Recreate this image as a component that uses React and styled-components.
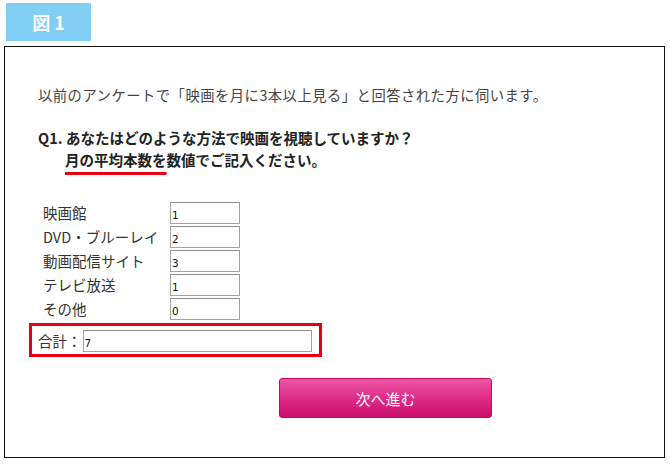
import React from 'react';
import styled, { createGlobalStyle } from 'styled-components';

const GlobalStyle = createGlobalStyle`
  body {
    margin: 0;
    background: #fff;
    font-family: "Noto Sans CJK JP", "Noto Sans", sans-serif;
    color: #333;
  }
`;

const StyledPageDiv = styled.div`
  padding: 3px 0 0 4px;
`;

const StyledBadgeDiv = styled.div`
  box-sizing: border-box;
  width: 85px;
  height: 38px;
  margin-left: 2px;
  padding-left: 4px;
  background: #80cef4;
  color: #fff;
  font-weight: bold;
  font-size: 18px;
  letter-spacing: 4px;
  display: flex;
  align-items: center;
  justify-content: center;
`;

const StyledFrameDiv = styled.div`
  box-sizing: border-box;
  width: 661px;
  height: 412px;
  margin-top: 5px;
  border: 1px solid #111;
  padding: 38px 0 0 24px;
`;

const StyledIntroP = styled.p`
  margin: 0 0 0 9px;
  font-size: 14.3px;
  letter-spacing: 0.5px;
  line-height: 20px;
  color: #444;
`;

const StyledQuestionP = styled.p`
  margin: 22px 0 0 9px;
  padding-left: 27px;
  font-size: 14.5px;
  line-height: 22px;
  font-weight: bold;
  color: #222;
`;

const StyledQNumSpan = styled.span`
  display: inline-block;
  width: 28px;
  margin-left: -27px;
`;

const StyledMarkSpan = styled.span`
  text-decoration: underline;
  text-decoration-color: #e60012;
  text-decoration-thickness: 3px;
  text-underline-offset: 6px;
`;

const StyledRowsDiv = styled.div`
  display: grid;
  grid-template-columns: 127px 70px;
  grid-auto-rows: 22px;
  row-gap: 2px;
  margin: 31px 0 0 14px;
`;

const StyledLabelSpan = styled.span`
  font-size: 14.5px;
  line-height: 22px;
  color: #333;
  white-space: nowrap;
`;

const StyledInput = styled.input`
  box-sizing: border-box;
  width: ${p => p.w}px;
  height: 22px;
  margin: 0;
  padding: 3px 1px 0;
  border: 1px solid #a3a3a3;
  border-top-color: #8e8e8e;
  font-family: "DejaVu Sans", "Liberation Sans", sans-serif;
  font-size: 10.5px;
  color: #111;
  background: #fff;
  outline: none;
`;

const StyledTotalDiv = styled.div`
  box-sizing: border-box;
  width: 293px;
  height: 34px;
  margin-top: 3px;
  border: 3px solid #e60012;
  padding: 4px 0 0 6px;
  display: flex;
  align-items: flex-start;
  gap: 1px;
`;

const StyledButton = styled.button`
  display: flex;
  align-items: center;
  justify-content: center;
  width: 213px;
  height: 40px;
  margin: 21px 0 0 250px;
  border: 1px solid #c20a63;
  border-radius: 3px;
  background: linear-gradient(to bottom, #ec56a5 0%, #df2c88 50%, #cb0d6b 100%);
  color: #fff;
  font-family: inherit;
  font-size: 15px;
  cursor: pointer;
`;

const items = [
  { label: '映画館', value: '1' },
  { label: 'DVD・ブルーレイ', value: '2' },
  { label: '動画配信サイト', value: '3' },
  { label: 'テレビ放送', value: '1' },
  { label: 'その他', value: '0' },
];

const App = () => (
  <StyledPageDiv>
    <GlobalStyle />
    <StyledBadgeDiv>図1</StyledBadgeDiv>
    <StyledFrameDiv>
      <StyledIntroP>以前のアンケートで「映画を月に3本以上見る」と回答された方に伺います。</StyledIntroP>
      <StyledQuestionP>
        <StyledQNumSpan>Q1.</StyledQNumSpan>あなたはどのような方法で映画を視聴していますか？
        <br />
        <StyledMarkSpan>月の平均本数を</StyledMarkSpan>数値でご記入ください。
      </StyledQuestionP>
      <StyledRowsDiv>
        {items.map(item => (
          <React.Fragment key={item.label}>
            <StyledLabelSpan>{item.label}</StyledLabelSpan>
            <StyledInput w={70} defaultValue={item.value} />
          </React.Fragment>
        ))}
      </StyledRowsDiv>
      <StyledTotalDiv>
        <StyledLabelSpan>合計：</StyledLabelSpan>
        <StyledInput w={229} defaultValue="7" />
      </StyledTotalDiv>
      <StyledButton>次へ進む</StyledButton>
    </StyledFrameDiv>
  </StyledPageDiv>
);

export default App;
